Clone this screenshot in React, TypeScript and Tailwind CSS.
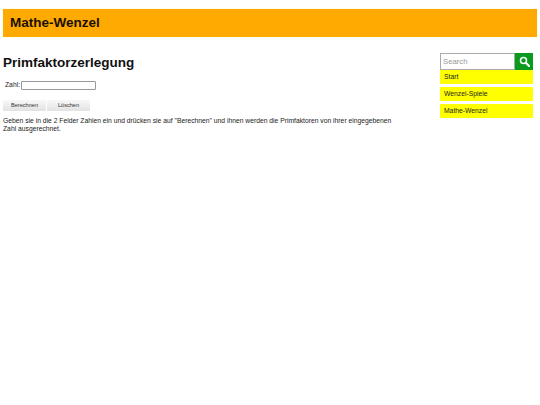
import { useState } from "react";

const links = ["Start", "Wenzel-Spiele", "Mathe-Wenzel"];

export default function App() {
	const [zahl, setZahl] = useState("");

	return (
		<div className="min-h-[405px] bg-white font-['Liberation_Sans',Arial,sans-serif] text-black pt-[9px] px-[3px]">
			{/* Header */}
			<div className="h-[28px] w-[534px] bg-[#ffaa00] flex items-center pl-[7px] shadow-[0_0_1px_#ffee99]">
				<span className="text-[13.5px] font-bold leading-none text-[#1a1000]">Mathe-Wenzel</span>
			</div>

			<div className="flex justify-between">
				{/* Main column */}
				<div className="w-[392px]">
					<h1 className="text-[13.5px] font-bold leading-[18px] mt-[17px] text-[#111]">Primfaktorzerlegung</h1>
					<div className="flex items-center mt-[8px] pl-[2px] text-[6.75px] text-[#222]">
						<span>Zahl:</span>
						<input
							value={zahl}
							onChange={(e) => setZahl(e.target.value)}
							className="ml-[0.5px] w-[75px] h-[9px] bg-white border border-[#999] rounded-[1px] outline-none"
						/>
					</div>
					<div className="flex gap-[1px] mt-[10px]">
						<button className="w-[43px] h-[11px] rounded-[1px] bg-gradient-to-b from-[#f8f8f8] to-[#e2e2e2] text-[5.6px] leading-none text-[#333]">
							Berechnen
						</button>
						<button className="w-[43px] h-[11px] rounded-[1px] bg-gradient-to-b from-[#f8f8f8] to-[#e2e2e2] text-[5.6px] leading-none text-[#333]">
							Löschen
						</button>
					</div>
					<p className="text-[6.75px] leading-[8px] mt-[6px] text-[#222]">
						Geben sie in die 2 Felder Zahlen ein und drücken sie auf "Berechnen" und ihnen werden die Primfaktoren von ihrer eingegebenen Zahl ausgerechnet.
					</p>
				</div>

				{/* Sidebar */}
				<div className="w-[93px] mt-[16px] mr-[4px]">
					<div className="flex h-[17px]">
						<input
							placeholder="Search"
							className="w-[75px] h-[17px] bg-white border border-[#aaa] px-[2px] text-[7.75px] outline-none placeholder:text-[#999]"
						/>
						<div className="w-[18px] h-[17px] bg-[#0a9a1e] flex items-center justify-center">
							<svg width="11" height="11" viewBox="0 0 11 11" fill="none" stroke="white">
								<circle cx="4.5" cy="4.5" r="3" strokeWidth="1.5" />
								<path d="M6.8 6.8 L10 10" strokeWidth="2.2" strokeLinecap="round" />
							</svg>
						</div>
					</div>
					<div className="flex flex-col gap-[3px]">
						{links.map((link) => (
							<a key={link} className="h-[14px] bg-[#ffff00] flex items-center pl-[4px] text-[6.75px] text-[#222]">
								{link}
							</a>
						))}
					</div>
				</div>
			</div>
		</div>
	);
}
